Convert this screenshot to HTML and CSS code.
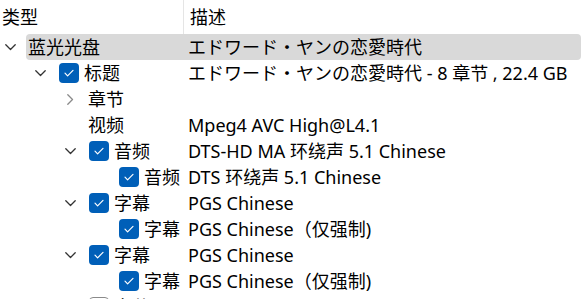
FILE: index.html
```html
<!DOCTYPE html>
<html lang="zh">
<head>
<meta charset="UTF-8">
<title>蓝光光盘</title>
<link rel="stylesheet" href="styles.css">
</head>
<body>
<div class="tree">
  <div class="head">
    <div class="col c1">类型</div>
    <div class="col c2">描述</div>
  </div>

  <div class="row l0 sel">
    <span class="twisty"><svg class="down" viewBox="0 0 11 7"><path d="M0.8 0.8 L5.5 5.5 L10.2 0.8"/></svg></span>
    <div class="body"><span class="name">蓝光光盘</span><span class="desc">エドワード・ヤンの恋愛時代</span></div>
  </div>

  <div class="row l1">
    <span class="twisty"><svg class="down" viewBox="0 0 11 7"><path d="M0.8 0.8 L5.5 5.5 L10.2 0.8"/></svg></span>
    <div class="body"><span class="name"><i class="cb on"></i>标题</span><span class="desc">エドワード・ヤンの恋愛時代 - 8 章节 , 22.4 GB</span></div>
  </div>

  <div class="row l2">
    <span class="twisty"><svg class="right" viewBox="0 0 7 11"><path d="M0.8 0.8 L5.5 5.5 L0.8 10.2"/></svg></span>
    <div class="body"><span class="name">章节</span><span class="desc"></span></div>
  </div>

  <div class="row l2">
    <span class="twisty"></span>
    <div class="body"><span class="name">视频</span><span class="desc">Mpeg4 AVC High@L4.1</span></div>
  </div>

  <div class="row l2">
    <span class="twisty"><svg class="down" viewBox="0 0 11 7"><path d="M0.8 0.8 L5.5 5.5 L10.2 0.8"/></svg></span>
    <div class="body"><span class="name"><i class="cb on"></i>音频</span><span class="desc">DTS-HD MA 环绕声 5.1 Chinese</span></div>
  </div>

  <div class="row l3">
    <span class="twisty"></span>
    <div class="body"><span class="name"><i class="cb on"></i>音频</span><span class="desc">DTS 环绕声 5.1 Chinese</span></div>
  </div>

  <div class="row l2">
    <span class="twisty"><svg class="down" viewBox="0 0 11 7"><path d="M0.8 0.8 L5.5 5.5 L10.2 0.8"/></svg></span>
    <div class="body"><span class="name"><i class="cb on"></i>字幕</span><span class="desc">PGS Chinese</span></div>
  </div>

  <div class="row l3">
    <span class="twisty"></span>
    <div class="body"><span class="name"><i class="cb on"></i>字幕</span><span class="desc">PGS Chinese（仅强制)</span></div>
  </div>

  <div class="row l2">
    <span class="twisty"><svg class="down" viewBox="0 0 11 7"><path d="M0.8 0.8 L5.5 5.5 L10.2 0.8"/></svg></span>
    <div class="body"><span class="name"><i class="cb on"></i>字幕</span><span class="desc">PGS Chinese</span></div>
  </div>

  <div class="row l3">
    <span class="twisty"></span>
    <div class="body"><span class="name"><i class="cb on"></i>字幕</span><span class="desc">PGS Chinese（仅强制)</span></div>
  </div>

  <div class="row l2">
    <span class="twisty"></span>
    <div class="body"><span class="name"><i class="cb"></i>字幕</span><span class="desc">PGS English</span></div>
  </div>
</div>
</body>
</html>
```

FILE: styles.css
```css
body{margin:0;background:#fff;color:#000;font-family:"Noto Sans","Noto Sans CJK SC",sans-serif;font-size:18px;overflow:hidden;}

.tree{width:581px;}

/* header */
.head{display:flex;height:34px;}
.col{display:flex;align-items:center;line-height:26px;}
.c1{width:181px;padding-left:2px;border-right:1px solid #e5e5e5;}
.c2{flex:1;padding-left:6px;}

/* rows */
.row{display:flex;height:26px;line-height:26px;white-space:nowrap;}
.l1{padding-left:30px;}
.l2{padding-left:60px;}
.l3{padding-left:90px;}

.twisty{flex:none;width:20px;margin-right:6px;display:flex;align-items:center;justify-content:center;}
.twisty svg{fill:none;stroke-width:1.3;stroke-linecap:round;stroke-linejoin:round;}
.down{width:11px;height:7px;stroke:#333;}
.right{width:7px;height:11px;stroke:#8a8a8a;}

.body{flex:1;display:flex;align-items:center;border-radius:4px;}
.sel .body{background:#d9d9d9;}

.name{flex:none;display:flex;align-items:center;padding-left:2px;}
.l0 .name{width:155px;}
.l1 .name{width:125px;}
.l2 .name{width:95px;}
.l3 .name{width:65px;}

.desc{padding-left:5px;}

/* checkbox */
.cb{flex:none;width:20px;height:20px;margin:0 5px 0 1px;box-sizing:border-box;border:1px solid #8a8a8a;border-radius:4px;background:#fff;}
.cb.on{border:none;background:#005fb8 url("data:image/svg+xml,%3Csvg xmlns='http://www.w3.org/2000/svg' viewBox='0 0 20 20'%3E%3Cpath d='M6 10.2 L8.6 12.8 L14 7.4' fill='none' stroke='%23fff' stroke-width='1.2' stroke-linecap='round' stroke-linejoin='round'/%3E%3C/svg%3E") center/20px 20px no-repeat;}
```
